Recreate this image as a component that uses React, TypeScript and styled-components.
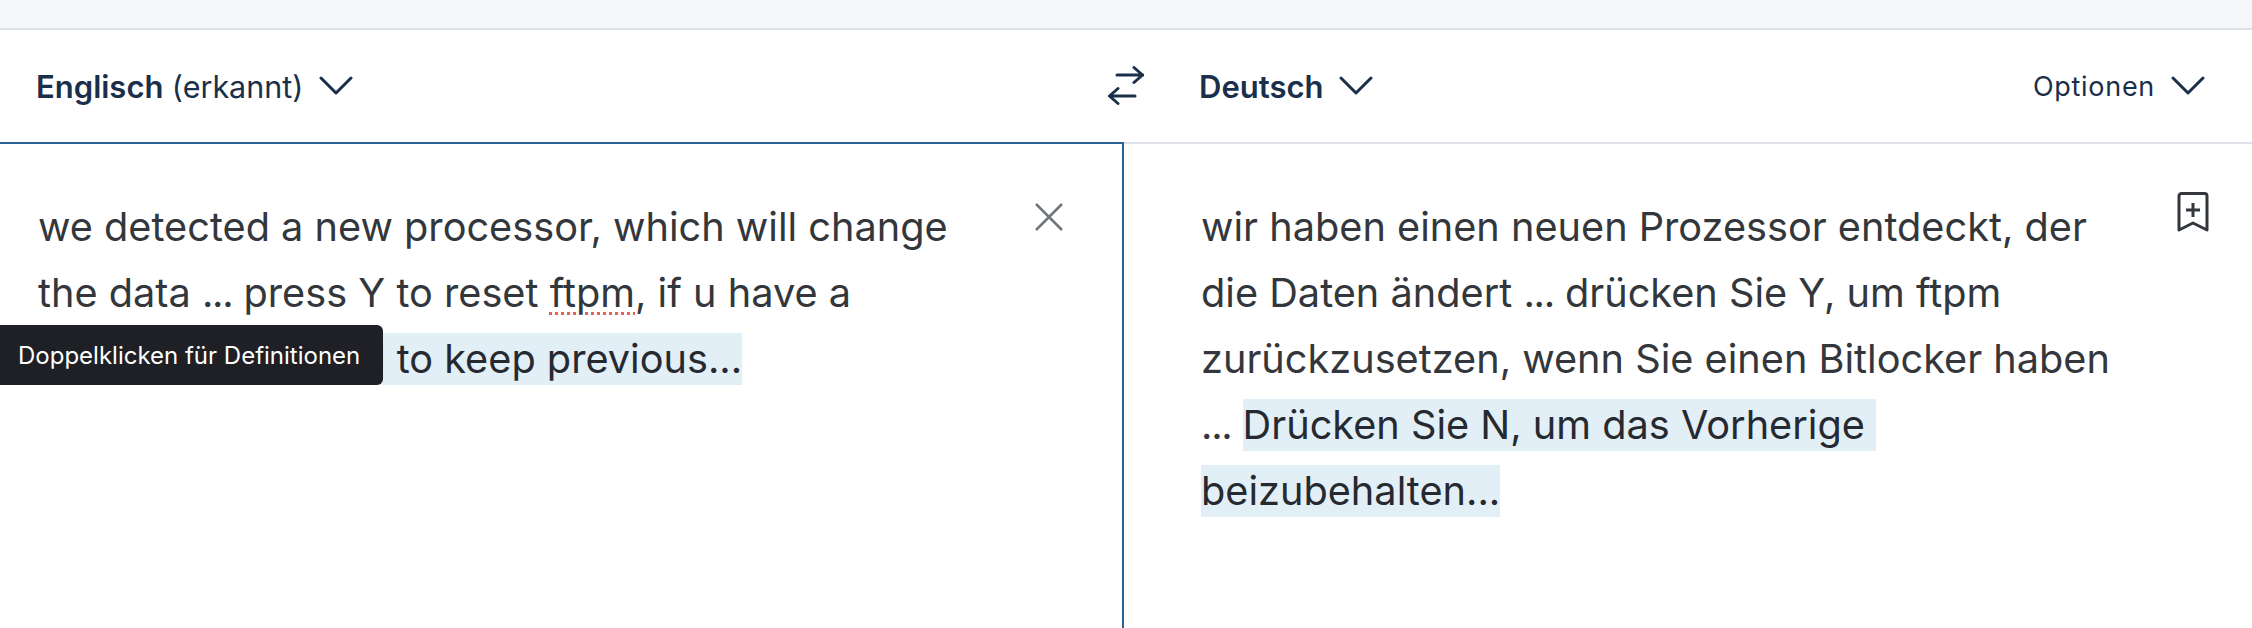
import React from "react";
import styled, { createGlobalStyle } from "styled-components";

const Global = createGlobalStyle`
  html, body { margin: 0; padding: 0; background: #fff; }
  body { font-family: Inter, "Liberation Sans", sans-serif; overflow: hidden; }
`;
const Page = styled.div`
  width: 2252px;
  height: 628px;
  display: flex;
  flex-direction: column;
  overflow: hidden;
`;
const TopBand = styled.div`
  height: 28px;
  flex: none;
  background: #f5f6f8;
  border-bottom: 2px solid #dee2e8;
`;
const Header = styled.div`
  height: 112px;
  flex: none;
  display: grid;
  grid-template-columns: 1124px 1fr;
`;
const HeaderCell = styled.div<{ $pad: number }>`
  display: flex;
  align-items: center;
  padding-left: ${(p) => p.$pad}px;
  padding-right: 47px;
  position: relative;
`;
const LangButton = styled.div`
  display: flex;
  align-items: center;
  gap: 16px;
  font-size: 30px;
  color: #1a2f4a;
`;
const Bold = styled.span`
  font-weight: 600;
  font-size: 31px;
`;
const Light = styled.span`
  font-weight: 400;
  font-size: 30.500px;
`;
const OptionsButton = styled(LangButton)`
  margin-left: auto;
  font-size: 27px;
  gap: 16px;
  letter-spacing: 0.7px;
`;
const SwapSlot = styled.div`
  position: absolute;
  right: -20px;
  top: 36px;
  width: 36px;
  height: 40px;
  color: #1a2f4a;
`;
const Panels = styled.div`
  flex: 1;
  display: grid;
  grid-template-columns: 1124px 1fr;
`;
const SourcePanel = styled.div`
  position: relative;
  border-top: 2px solid #2b6494;
  border-right: 2px solid #2b6494;
  padding: 50px 132px 0 38px;
`;
const TargetPanel = styled.div`
  position: relative;
  border-top: 2px solid #dee2e8;
  padding: 50px 125px 0 77px;
`;
const Body = styled.div`
  font-size: 39.700px;
  line-height: 66px;
  color: #33373c;
`;
const Mark = styled.span`
  background: #e3eff6;
  color: #262a30;
  padding: 2px 0;
  white-space: pre-wrap;
`;
const Covered = styled.span`
  letter-spacing: -0.75px;
`;
const Dots = styled.span`
  letter-spacing: -1.3px;
`;
const Spell = styled.span`
  text-decoration: underline dotted #e8604f 3px;
  text-underline-offset: 5px;
`;
const Tooltip = styled.div`
  position: absolute;
  left: 0;
  top: 181px;
  width: 383px;
  height: 60px;
  box-sizing: border-box;
  padding-left: 18px;
  display: flex;
  align-items: center;
  background: #1e2026;
  color: #fff;
  font-size: 24px;
  border-radius: 0 6px 6px 0;
`;
const CloseSlot = styled.div`
  position: absolute;
  top: 58px;
  right: 58px;
  width: 30px;
  height: 30px;
  color: #70757a;
`;
const SaveSlot = styled.div`
  position: absolute;
  top: 48px;
  right: 43px;
  width: 32px;
  height: 40px;
  color: #33373c;
`;

const Chevron = () => (
  <svg width="34" height="20" viewBox="0 0 34 20" fill="none" stroke="currentColor" strokeWidth="3" strokeLinecap="round" strokeLinejoin="round">
    <path d="M2 2l15 15L32 2" />
  </svg>
);

export default function App() {
  return (
    <Page>
      <Global />
      <TopBand />
      <Header>
        <HeaderCell $pad={36}>
          <LangButton>
            <span>
              <Bold>Englisch</Bold> <Light>(erkannt)</Light>
            </span>
            <Chevron />
          </LangButton>
          <SwapSlot>
            <svg width="36" height="40" viewBox="0 0 36 40" fill="none" stroke="currentColor" strokeWidth="3" strokeLinecap="round" strokeLinejoin="round">
              <path d="M9 9h26M26 1.5l8.5 7.5-8.5 7.5" />
              <path d="M27 30H2M10 22.5L1.500 30l8.500 7.500" />
            </svg>
          </SwapSlot>
        </HeaderCell>
        <HeaderCell $pad={75}>
          <LangButton>
            <Bold>Deutsch</Bold>
            <Chevron />
          </LangButton>
          <OptionsButton>
            <span>Optionen</span>
            <Chevron />
          </OptionsButton>
        </HeaderCell>
      </Header>
      <Panels>
        <SourcePanel>
          <Body>
            we detected a new processor, which will change the data <Dots>...</Dots> press Y to reset <Spell>ftpm</Spell>, if u have a <Covered>bitlocker ... <Mark>press N</Mark></Covered><Mark> to keep previous...</Mark>
          </Body>
          <Tooltip>Doppelklicken für Definitionen</Tooltip>
          <CloseSlot>
            <svg width="30" height="30" viewBox="0 0 30 30" fill="none" stroke="currentColor" strokeWidth="2.500">
              <path d="M2 2l26 26M28 2L2 28" />
            </svg>
          </CloseSlot>
        </SourcePanel>
        <TargetPanel>
          <Body>
            wir haben einen neuen Prozessor entdeckt, der die Daten ändert <Dots>...</Dots> drücken Sie Y, um ftpm zurückzusetzen, wenn Sie einen Bitlocker haben <Dots>...</Dots> <Mark>Drücken Sie N, um das Vorherige </Mark><Mark>beizubehalten...</Mark>
          </Body>
          <SaveSlot>
            <svg width="32" height="40" viewBox="0 0 32 40" fill="none" stroke="currentColor" strokeWidth="3" strokeLinejoin="round">
              <path d="M2 38V4a2.500 2.500 0 0 1 2.500-2.500h23A2.500 2.500 0 0 1 30 4v34L16 31z" />
              <path d="M16 11v14M9 18h14" />
            </svg>
          </SaveSlot>
        </TargetPanel>
      </Panels>
    </Page>
  );
}
